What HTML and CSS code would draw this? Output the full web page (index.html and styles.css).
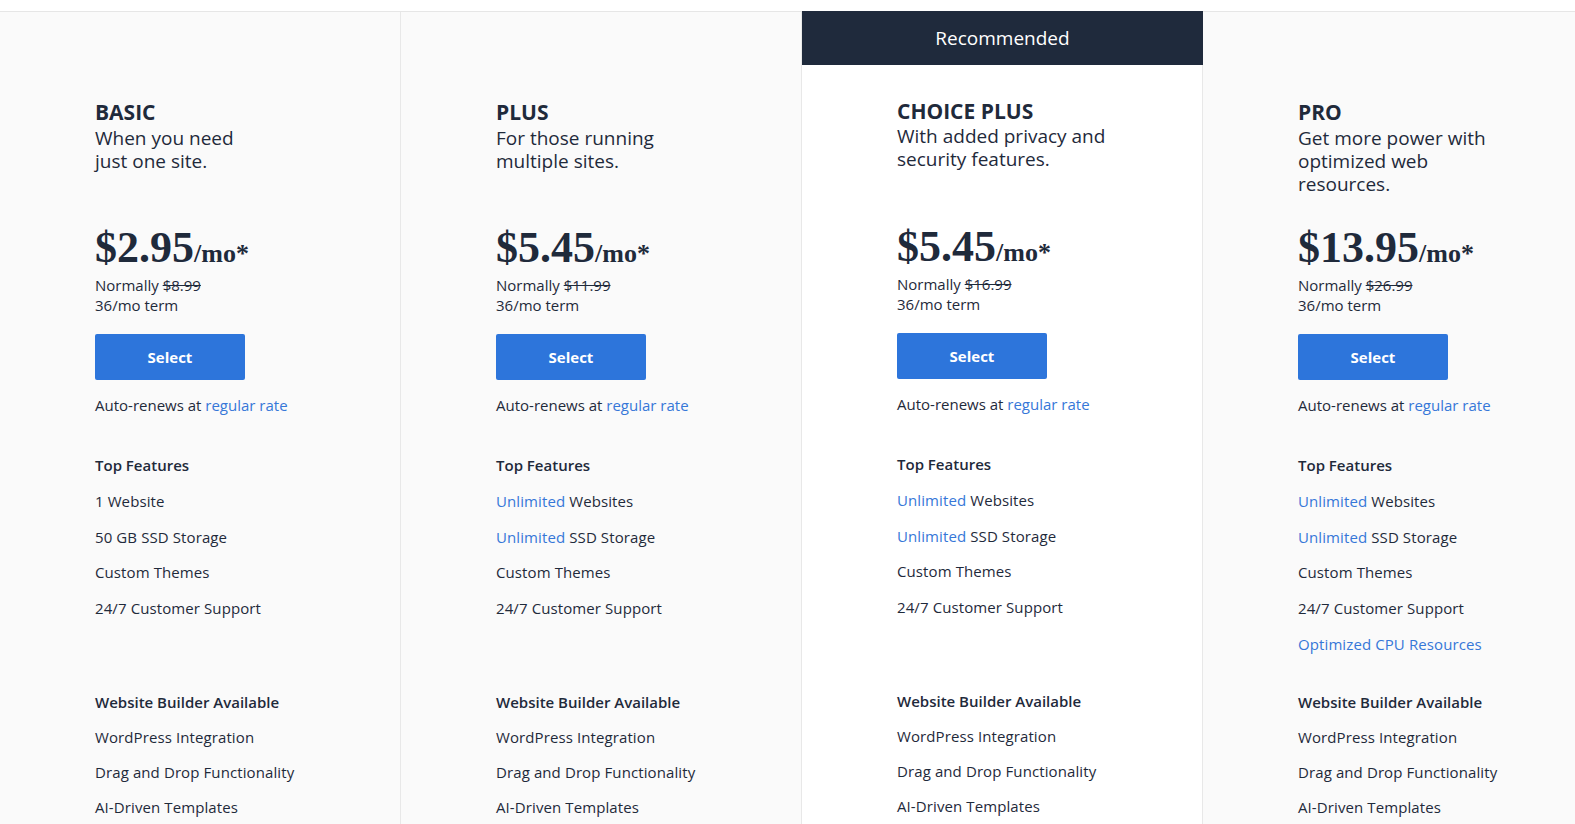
FILE: index.html
```html
<!DOCTYPE html>
<html lang="en">
<head>
<meta charset="utf-8">
<title>Hosting plans</title>
<link rel="stylesheet" href="styles.css">
</head>
<body>
<main class="plans">
  <section class="plan">
    <div class="plan-body">
      <div class="plan-head">
        <h2 class="plan-name">BASIC</h2>
        <p class="plan-desc">When you need<br>just one site.</p>
      </div>
      <div class="price"><span class="amount">$2.95</span><span class="per">/mo*</span></div>
      <p class="normal">Normally <s>$8.99</s></p>
      <p class="term">36/mo term</p>
      <button class="select">Select</button>
      <p class="renew">Auto-renews at <a href="#">regular rate</a></p>
      <ul class="features top">
        <li class="f-head">Top Features</li>
        <li>1 Website</li>
        <li>50 GB SSD Storage</li>
        <li>Custom Themes</li>
        <li>24/7 Customer Support</li>
      </ul>
      <ul class="features builder">
        <li class="f-head">Website Builder Available</li>
        <li>WordPress Integration</li>
        <li>Drag and Drop Functionality</li>
        <li>AI-Driven Templates</li>
      </ul>
    </div>
  </section>

  <section class="plan">
    <div class="plan-body">
      <div class="plan-head">
        <h2 class="plan-name">PLUS</h2>
        <p class="plan-desc">For those running<br>multiple sites.</p>
      </div>
      <div class="price"><span class="amount">$5.45</span><span class="per">/mo*</span></div>
      <p class="normal">Normally <s>$11.99</s></p>
      <p class="term">36/mo term</p>
      <button class="select">Select</button>
      <p class="renew">Auto-renews at <a href="#">regular rate</a></p>
      <ul class="features top">
        <li class="f-head">Top Features</li>
        <li><span class="hl">Unlimited</span> Websites</li>
        <li><span class="hl">Unlimited</span> SSD Storage</li>
        <li>Custom Themes</li>
        <li>24/7 Customer Support</li>
      </ul>
      <ul class="features builder">
        <li class="f-head">Website Builder Available</li>
        <li>WordPress Integration</li>
        <li>Drag and Drop Functionality</li>
        <li>AI-Driven Templates</li>
      </ul>
    </div>
  </section>

  <section class="plan plan-rec">
    <div class="rec-badge">Recommended</div>
    <div class="plan-body">
      <div class="plan-head">
        <h2 class="plan-name">CHOICE PLUS</h2>
        <p class="plan-desc">With added privacy and<br>security features.</p>
      </div>
      <div class="price"><span class="amount">$5.45</span><span class="per">/mo*</span></div>
      <p class="normal">Normally <s>$16.99</s></p>
      <p class="term">36/mo term</p>
      <button class="select">Select</button>
      <p class="renew">Auto-renews at <a href="#">regular rate</a></p>
      <ul class="features top">
        <li class="f-head">Top Features</li>
        <li><span class="hl">Unlimited</span> Websites</li>
        <li><span class="hl">Unlimited</span> SSD Storage</li>
        <li>Custom Themes</li>
        <li>24/7 Customer Support</li>
      </ul>
      <ul class="features builder">
        <li class="f-head">Website Builder Available</li>
        <li>WordPress Integration</li>
        <li>Drag and Drop Functionality</li>
        <li>AI-Driven Templates</li>
      </ul>
    </div>
  </section>

  <section class="plan">
    <div class="plan-body">
      <div class="plan-head">
        <h2 class="plan-name">PRO</h2>
        <p class="plan-desc">Get more power with<br>optimized web<br>resources.</p>
      </div>
      <div class="price"><span class="amount">$13.95</span><span class="per">/mo*</span></div>
      <p class="normal">Normally <s>$26.99</s></p>
      <p class="term">36/mo term</p>
      <button class="select">Select</button>
      <p class="renew">Auto-renews at <a href="#">regular rate</a></p>
      <ul class="features top">
        <li class="f-head">Top Features</li>
        <li><span class="hl">Unlimited</span> Websites</li>
        <li><span class="hl">Unlimited</span> SSD Storage</li>
        <li>Custom Themes</li>
        <li>24/7 Customer Support</li>
        <li class="hl">Optimized CPU Resources</li>
      </ul>
      <ul class="features builder">
        <li class="f-head">Website Builder Available</li>
        <li>WordPress Integration</li>
        <li>Drag and Drop Functionality</li>
        <li>AI-Driven Templates</li>
      </ul>
    </div>
  </section>
</main>
</body>
</html>
```

FILE: styles.css
```css
html, body {
  margin: 0;
  padding: 0;
  overflow: hidden;
  background: #ffffff;
}

body {
  font-family: "Open Sans", "Liberation Sans", sans-serif;
  color: #1f2a3b;
  padding-top: 11px;
}

.plans {
  display: grid;
  grid-template-columns: 401px 401px 401px 1fr;
  border-top: 1px solid #e6e6e6;
}

.plan {
  background: #fafafa;
  border-right: 1px solid #e8e8e8;
  box-sizing: border-box;
  min-height: 812px;
}

.plan:last-child {
  border-right: none;
}

.plan-rec {
  background: #ffffff;
  margin-top: -1px;
}

.rec-badge {
  height: 54px;
  background: #1f2a3c;
  color: #ffffff;
  font-size: 19px;
  font-weight: 500;
  display: flex;
  align-items: center;
  justify-content: center;
  margin-right: -1px;
}

.plan-body {
  padding: 88px 0 0 95px;
}

.plan-rec .plan-body {
  padding-top: 34px;
}

.plan-head {
  height: 123px;
}

.plan-name {
  margin: 0;
  font-size: 21px;
  line-height: 24px;
  font-weight: 700;
}

.plan-desc {
  margin: 3px 0 0;
  font-size: 19px;
  line-height: 23px;
  font-weight: 400;
}

.plan-rec .plan-desc {
  margin-top: 2px;
}

.price {
  font-family: "Liberation Serif", "Times New Roman", serif;
  font-weight: 700;
  line-height: 50px;
  height: 50px;
  white-space: nowrap;
}

.amount {
  font-size: 44px;
}

.per {
  font-size: 26px;
}

.normal, .term, .renew {
  margin: 0;
  font-size: 15px;
  line-height: 20px;
}

.normal {
  margin-top: 2px;
}

.normal s {
  text-decoration-thickness: 1px;
}

.select {
  display: block;
  margin-top: 19px;
  width: 150px;
  height: 46px;
  border: none;
  border-radius: 2px;
  background: #2d75db;
  color: #ffffff;
  font-family: "Open Sans", "Liberation Sans", sans-serif;
  font-size: 15px;
  font-weight: 700;
  padding: 0;
}

.renew {
  margin-top: 15px;
}

.renew a {
  color: #3677d8;
  text-decoration: none;
}

.features {
  list-style: none;
  margin: 0;
  padding: 0;
  font-size: 15px;
  letter-spacing: 0.1px;
}

.features.top {
  margin-top: 33px;
  height: 237px;
  line-height: 35.75px;
}

.features.builder {
  line-height: 35px;
}

.f-head {
  font-weight: 600;
  letter-spacing: 0;
}

.hl {
  color: #3677d8;
}
```
